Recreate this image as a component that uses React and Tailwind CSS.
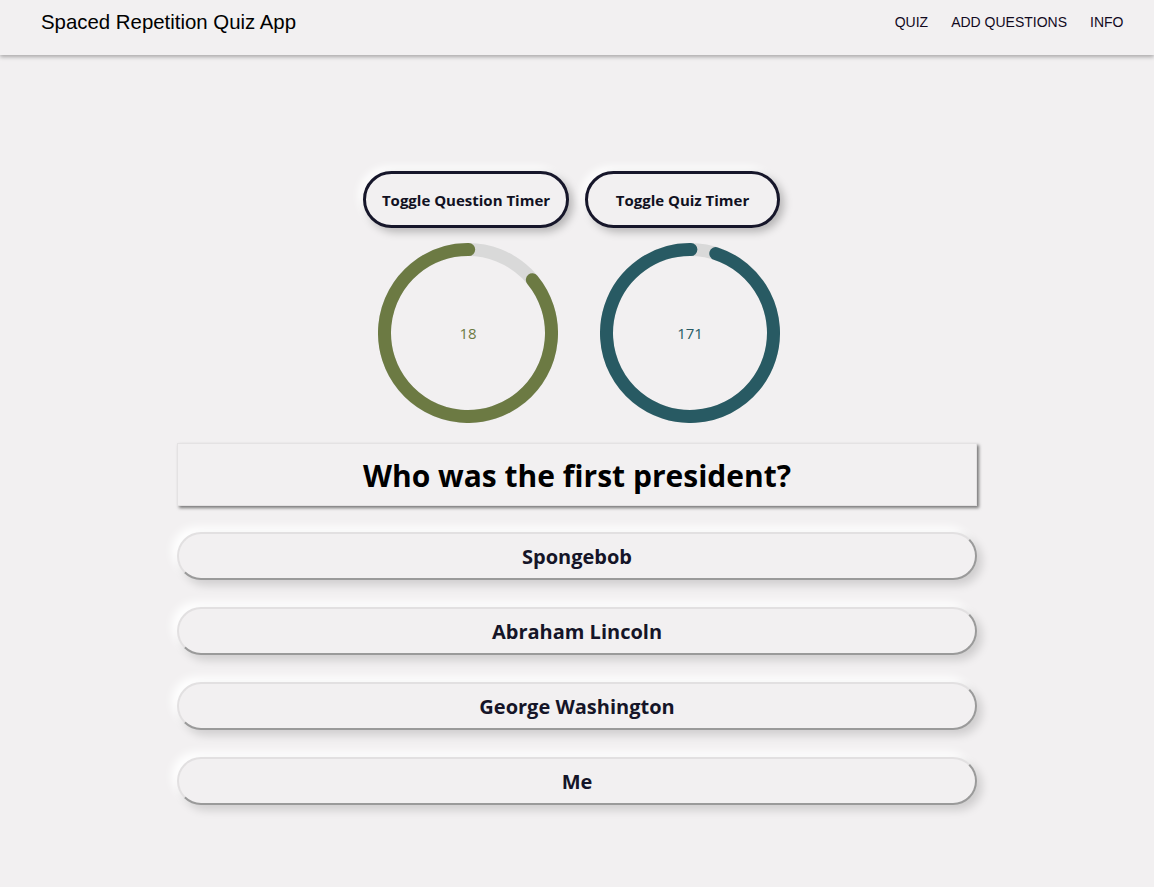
const ANSWERS = ["Spongebob", "Abraham Lincoln", "George Washington", "Me"];

function Ring({ value, fraction, color }) {
  const r = 83.5;
  const c = 2 * Math.PI * r;
  const gapDeg = (1 - fraction) * 360;
  return (
    <div className="relative w-[180px] h-[180px]">
      <svg width="180" height="180" viewBox="0 0 180 180">
        <circle cx="90" cy="90" r={r} fill="none" stroke="#d9d9d9" strokeWidth="13" />
        <circle
          cx="90"
          cy="90"
          r={r}
          fill="none"
          stroke={color}
          strokeWidth="13"
          strokeLinecap="round"
          strokeDasharray={`${c * fraction} ${c}`}
          transform={`rotate(${-90 + gapDeg} 90 90)`}
        />
      </svg>
      <div
        className="absolute inset-0 flex items-center justify-center text-[15px] font-['Open_Sans',sans-serif]"
        style={{ color }}
      >
        {value}
      </div>
    </div>
  );
}

export default function App() {
  return (
    <div className="min-h-[887px] bg-[#f2f0f1] font-['Open_Sans',sans-serif]">
      <header className="h-[55px] flex items-start justify-between pt-[10px] pl-[41px] pr-[19px] bg-[#f2f0f1] shadow-[0_2px_4px_rgba(0,0,0,0.3)] font-['Liberation_Sans',Arial,sans-serif]">
        <span className="text-[20.4px] leading-[24px] text-black">Spaced Repetition Quiz App</span>
        <nav className="flex items-center text-[14px] leading-[24px] text-[#120a1e]">
          <a className="px-[11.5px]">QUIZ</a>
          <a className="px-[11.5px]">ADD QUESTIONS</a>
          <a className="px-[11.5px]">INFO</a>
        </nav>
      </header>

      <main className="flex flex-col items-center pt-[116px]">
        <div className="flex gap-4 mr-[11px]">
          <button className="w-[206px] h-[57px] pt-[1px] rounded-full border-[3px] border-[#16162a] text-[15px] font-bold text-[#111122] bg-[#f2f0f1] shadow-[4px_4px_8px_rgba(0,0,0,0.25),-4px_-4px_8px_#ffffff]">
            Toggle Question Timer
          </button>
          <button className="w-[195px] h-[57px] pt-[1px] rounded-full border-[3px] border-[#16162a] text-[15px] font-bold text-[#111122] bg-[#f2f0f1] shadow-[4px_4px_8px_rgba(0,0,0,0.25),-4px_-4px_8px_#ffffff]">
            Toggle Quiz Timer
          </button>
        </div>

        <div className="flex gap-[42px] mt-[15px] ml-[4px]">
          <Ring value="18" fraction={0.86} color="#6c7a43" />
          <Ring value="171" fraction={0.95} color="#285a63" />
        </div>

        <div className="mt-[20px] w-[800px] h-[63px] flex items-center justify-center bg-[#f2f0f1] shadow-[2px_2px_3px_rgba(0,0,0,0.5)] border border-[#e4e2e3]">
          <h1 className="text-[30px] font-bold text-black pt-[2px]">Who was the first president?</h1>
        </div>

        <div className="mt-[26px] flex flex-col gap-[27px]">
          {ANSWERS.map((a) => (
            <button
              key={a}
              className="w-[800px] h-[48px] pt-[1px] rounded-full bg-[#f2f0f1] border-2 border-t-[#e2e0e1] border-l-[#e2e0e1] border-b-[#9a9a9a] border-r-[#9a9a9a] text-[20px] font-bold text-[#151528] shadow-[5px_5px_10px_rgba(0,0,0,0.15),-5px_-5px_10px_#ffffff]"
            >
              {a}
            </button>
          ))}
        </div>
      </main>
    </div>
  );
}
